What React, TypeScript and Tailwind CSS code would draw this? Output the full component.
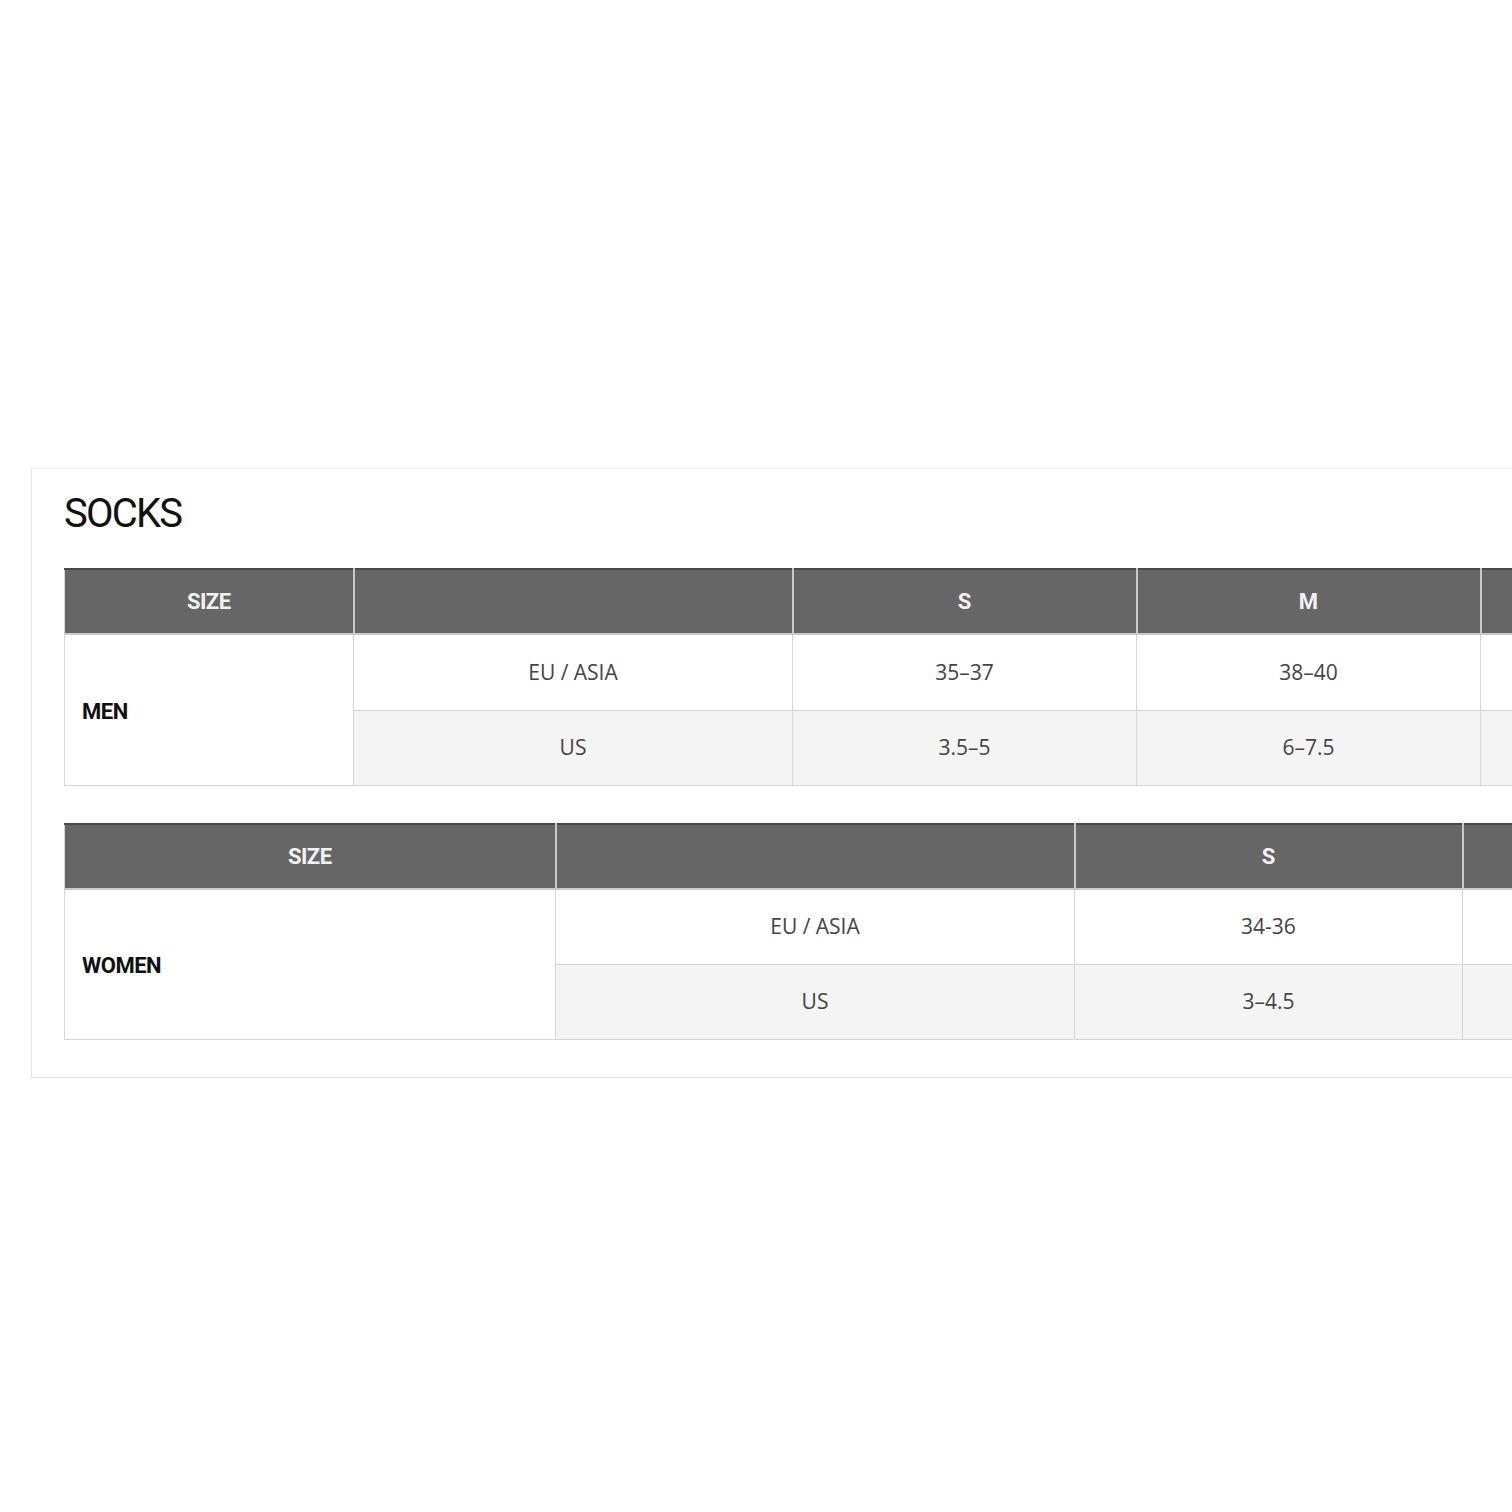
import React from 'react';

interface SizeTableProps {
  group: string;
  widths: number[];
  sizes: string[];
  eu: string[];
  us: string[];
}

// columns past the right edge of the window are left blank, as in the picture
const SizeTable = ({ group, widths, sizes, eu, us }: SizeTableProps) => {
  const total = widths.reduce((a, b) => a + b, 0);
  const extra = widths.length - 2 - sizes.length;
  return (
    <table
      className="table-fixed border-collapse border-t-2 border-t-[#4a4a4a]"
      style={{ width: total }}
    >
      <colgroup>
        {widths.map((w, i) => (
          <col key={i} style={{ width: w }} />
        ))}
      </colgroup>
      <thead>
        <tr className="h-[65px] bg-[#666666]">
          <th className="border-r-2 border-b-2 border-[#c9c9c9] border-l border-l-[#d6d6d6] text-center text-[22px] font-bold tracking-[-0.5px] text-[#f2f2f2] font-['Roboto',sans-serif]">
            SIZE
          </th>
          <th className="border-r-2 border-b-2 border-[#c9c9c9]" />
          {sizes.map((s) => (
            <th
              key={s}
              className="border-r-2 border-b-2 border-[#c9c9c9] text-center text-[22px] font-bold text-[#f2f2f2] font-['Roboto',sans-serif]"
            >
              {s}
            </th>
          ))}
          {Array.from({ length: extra }).map((_, i) => (
            <th key={i} className="border-r-2 border-b-2 border-[#c9c9c9]" />
          ))}
        </tr>
      </thead>
      <tbody className="font-['Open_Sans',sans-serif] text-[21px] text-[#444444]">
        <tr className="h-[76px] bg-white">
          <td
            rowSpan={2}
            className="border border-[#d6d6d6] pl-[17px] pt-[3px] text-left text-[22px] font-bold tracking-[-0.5px] text-[#111111] font-['Roboto',sans-serif]"
          >
            {group}
          </td>
          <td className="border border-[#d6d6d6] text-center">EU / ASIA</td>
          {eu.map((v, i) => (
            <td key={i} className="border border-[#d6d6d6] text-center">
              {v}
            </td>
          ))}
          {Array.from({ length: extra }).map((_, i) => (
            <td key={i} className="border border-[#d6d6d6]" />
          ))}
        </tr>
        <tr className="h-[75px] bg-[#f4f4f4]">
          <td className="border border-[#d6d6d6] text-center">US</td>
          {us.map((v, i) => (
            <td key={i} className="border border-[#d6d6d6] text-center">
              {v}
            </td>
          ))}
          {Array.from({ length: extra }).map((_, i) => (
            <td key={i} className="border border-[#d6d6d6]" />
          ))}
        </tr>
      </tbody>
    </table>
  );
};

const App = () => {
  return (
    <div className="min-h-screen w-full overflow-hidden bg-white pt-[468px]">
      <div className="ml-[31px] w-[2100px] border-t border-l border-b border-t-[#f3f3f3] border-l-[#e4e4e4] border-b-[#e0e0e0] pl-[32px] pt-[24px] pb-[37px]">
        <h1 className="mb-[34px] text-[40px] leading-[41px] tracking-[-1.8px] text-[#111111] font-['Roboto',sans-serif]">
          SOCKS
        </h1>
        <SizeTable
          group="MEN"
          widths={[289, 439, 344, 344, 344]}
          sizes={['S', 'M']}
          eu={['35–37', '38–40']}
          us={['3.5–5', '6–7.5']}
        />
        <div className="h-[37px]" />
        <SizeTable
          group="WOMEN"
          widths={[491, 519, 388, 388]}
          sizes={['S']}
          eu={['34-36']}
          us={['3–4.5']}
        />
      </div>
    </div>
  );
};

export default App;
